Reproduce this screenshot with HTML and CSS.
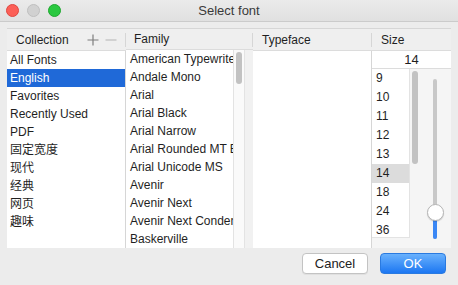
FILE: index.html
```html
<!DOCTYPE html>
<html lang="en">

<head>
    <meta charset="UTF-8">
    <title>Select font</title>
    <link rel="stylesheet" href="styles.css">
</head>

<body>
    <div class="window">
        <header class="titlebar">
            <div class="lights">
                <span class="light red"></span>
                <span class="light gray"></span>
                <span class="light green"></span>
            </div>
            <div class="title">Select font</div>
        </header>

        <main class="content">
            <section class="panel">
                <div class="col collection">
                    <div class="head">
                        <span class="label">Collection</span>
                        <span class="tools">
                            <svg width="12" height="12" viewBox="0 0 12 12"><path d="M6 0.5v11M0.5 6h11" stroke="#7d7d7d" stroke-width="1.2"/></svg>
                            <svg width="12" height="12" viewBox="0 0 12 12"><path d="M0.5 6h11" stroke="#bdbdbd" stroke-width="1.2"/></svg>
                        </span>
                    </div>
                    <ul class="list">
                        <li>All Fonts</li>
                        <li class="selected">English</li>
                        <li>Favorites</li>
                        <li>Recently Used</li>
                        <li>PDF</li>
                        <li>固定宽度</li>
                        <li>现代</li>
                        <li>经典</li>
                        <li>网页</li>
                        <li>趣味</li>
                    </ul>
                </div>

                <div class="col family">
                    <div class="head"><span class="label">Family</span></div>
                    <div class="body">
                        <ul class="list">
                            <li>American Typewriter</li>
                            <li>Andale Mono</li>
                            <li>Arial</li>
                            <li>Arial Black</li>
                            <li>Arial Narrow</li>
                            <li>Arial Rounded MT Bold</li>
                            <li>Arial Unicode MS</li>
                            <li>Avenir</li>
                            <li>Avenir Next</li>
                            <li>Avenir Next Condensed</li>
                            <li>Baskerville</li>
                        </ul>
                        <div class="track"><div class="thumb"></div></div>
                        <div class="gap"></div>
                    </div>
                </div>

                <div class="col typeface">
                    <div class="head"><span class="label">Typeface</span></div>
                    <ul class="list"></ul>
                </div>

                <div class="col size">
                    <div class="head"><span class="label">Size</span></div>
                    <div class="size-input">14</div>
                    <div class="size-body">
                        <ul class="list sizes">
                            <li>9</li>
                            <li>10</li>
                            <li>11</li>
                            <li>12</li>
                            <li>13</li>
                            <li class="current">14</li>
                            <li>18</li>
                            <li>24</li>
                            <li>36</li>
                        </ul>
                        <div class="size-track"><div class="thumb"></div></div>
                        <div class="slider">
                            <div class="rail"></div>
                            <div class="fill"></div>
                            <div class="knob"></div>
                        </div>
                    </div>
                </div>
            </section>

            <footer class="buttons">
                <button class="btn cancel">Cancel</button>
                <button class="btn ok">OK</button>
            </footer>
        </main>
    </div>
</body>

</html>
```

FILE: styles.css
```css
html,
body {
    margin: 0;
    height: 100%;
}

body {
    background: #ececec;
    font-family: "Liberation Sans", Arial, "Noto Sans CJK SC", sans-serif;
    font-size: 12px;
    color: #1f1f1f;
}

.window {
    width: 458px;
    height: 285px;
    display: flex;
    flex-direction: column;
}

.titlebar {
    height: 21px;
    border-bottom: 1px solid #cbcbcb;
    background: linear-gradient(#ebebeb, #e0e0e0);
    display: flex;
    align-items: center;
    position: relative;
}

.lights {
    display: flex;
    gap: 8px;
    padding-left: 6px;
}

.light {
    width: 11px;
    height: 11px;
    border-radius: 50%;
    border: 0.5px solid;
}

.red {
    background: #fc5f57;
    border-color: #df4740;
}

.gray {
    background: #d1d1d1;
    border-color: #bfbfbf;
}

.green {
    background: #2ac840;
    border-color: #1ea82f;
}

.title {
    position: absolute;
    left: 0;
    right: 0;
    text-align: center;
    font-size: 13px;
    color: #3a3a3a;
}

.content {
    flex: 1;
    display: flex;
    flex-direction: column;
    padding: 6px 7px 0 7px;
}

.panel {
    height: 220px;
    display: flex;
    border-top: 1px solid #d6d6d6;
    box-sizing: border-box;
}

.col {
    display: flex;
    flex-direction: column;
}

.head {
    height: 21px;
    border-bottom: 1px solid #dcdcdc;
    background: #efefef;
    display: flex;
    align-items: center;
    padding-left: 9px;
    position: relative;
}

.head::after {
    content: "";
    position: absolute;
    right: 0;
    top: 4px;
    height: 14px;
    border-right: 1px solid #d6d6d6;
}

.size .head::after {
    display: none;
}

.list {
    list-style: none;
    margin: 0;
    padding: 0;
    background: #fff;
    flex: 1;
    overflow: hidden;
}

.list li {
    height: 18px;
    line-height: 18px;
    padding-left: 3px;
    white-space: nowrap;
    overflow: hidden;
}

.collection {
    width: 119px;
}

.collection .list {
    border-right: 1px solid #d6d6d6;
}

.collection .list li.selected {
    background: #1f69d8;
    color: #fff;
}

.tools {
    display: flex;
    gap: 6px;
    margin-left: auto;
    margin-right: 9px;
}

.family {
    width: 127px;
}

.family .head {
    padding-left: 8px;
}

.family .body {
    flex: 1;
    display: flex;
}

.family .list li {
    padding-left: 4px;
}

.family .list {
    border-right: 1px solid #e3e3e3;
}

.track {
    width: 10px;
    background: #fafafa;
    border-right: 1px solid #e3e3e3;
}

.thumb {
    width: 6px;
    margin: 2px 0 0 2px;
    height: 32px;
    border-radius: 3px;
    background: #c2c2c2;
}

.gap {
    width: 8px;
    background: #f1f1f1;
}

.typeface {
    width: 119px;
}

.typeface .list {
    border-right: 1px solid #d6d6d6;
}

.size {
    flex: 1;
}

.size-input {
    height: 17px;
    line-height: 18px;
    background: #fff;
    border-bottom: 1px solid #dcdcdc;
    text-align: center;
    font-size: 13px;
}

.size-body {
    flex: 1;
    display: flex;
    background: #f5f5f5;
}

.sizes {
    flex: none;
    width: 37px;
    height: 168px;
    border-right: 1px solid #e3e3e3;
    border-bottom: 1px solid #e3e3e3;
}

.sizes li {
    height: 19px;
    line-height: 19px;
    padding-left: 4px;
}

.sizes li.current {
    background: #dcdcdc;
}

.size-track {
    width: 10px;
}

.size-track .thumb {
    height: 93px;
}

.slider {
    flex: 1;
    position: relative;
}

.rail {
    position: absolute;
    left: 13px;
    top: 10px;
    width: 4px;
    height: 160px;
    border-radius: 2px;
    background: #c8c8c8;
}

.fill {
    position: absolute;
    left: 13px;
    top: 142px;
    width: 4px;
    height: 28px;
    border-radius: 2px;
    background: #3a87f5;
}

.knob {
    position: absolute;
    left: 7px;
    top: 135px;
    width: 15px;
    height: 15px;
    border-radius: 50%;
    background: #fff;
    border: 0.5px solid #b5b5b5;
    box-shadow: 0 1px 1px rgba(0, 0, 0, 0.15);
}

.buttons {
    display: flex;
    justify-content: flex-end;
    gap: 12px;
    padding: 5px 5px 0 0;
}

.btn {
    width: 66px;
    height: 21px;
    border-radius: 4px;
    font-family: "Liberation Sans", Arial, sans-serif;
    font-size: 13px;
    padding: 0;
}

.cancel {
    background: #fff;
    border: 1px solid #c3c3c3;
    color: #222;
    box-shadow: 0 1px 0 rgba(0, 0, 0, 0.05);
}

.ok {
    background: linear-gradient(#69b1fd, #1c77f2);
    border: 1px solid #2a7ae0;
    color: #fff;
}
```
